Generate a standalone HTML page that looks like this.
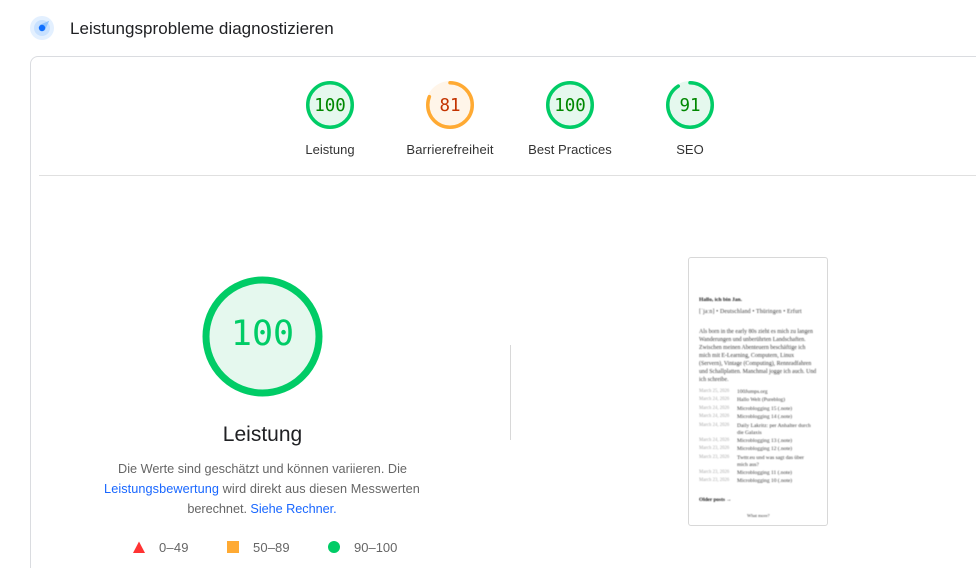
<!DOCTYPE html>
<html lang="de">
<head>
<meta charset="utf-8">
<title>Leistungsprobleme diagnostizieren</title>
<style>
html,body{margin:0;padding:0;background:#fff;overflow:hidden;}
#p{position:relative;width:976px;height:568px;overflow:hidden;background:#fff;font-family:"Liberation Sans",sans-serif;color:#202124;}
.t{position:absolute;white-space:nowrap;line-height:1;}
.c{transform:translateX(-50%);}
a{color:#1967ff;text-decoration:none;}
.s{position:absolute;white-space:nowrap;line-height:1;font-family:"Liberation Serif",serif;font-size:5.85px;color:#3a3a3a;}
.l{font-size:5.45px;}
.d{color:#aaa;font-size:4.75px;}
svg{position:absolute;}
</style>
</head>
<body>
<div id="p">
<svg style="left:30px;top:16px" width="24" height="24" viewBox="0 0 24 24">
<circle cx="12" cy="12" r="12" fill="#e3f0ff"/>
<circle cx="12" cy="12" r="8" fill="#c8e1ff"/>
<path d="M9.5 9 L19.2 4.8 L14.8 14.5 Z" fill="#8fc4ff"/>
<circle cx="12" cy="12" r="3.2" fill="#0f6fff"/>
</svg>
<div class="t" style="left:70px;top:20px;font-size:17px;letter-spacing:.03px;color:#202124;">Leistungsprobleme diagnostizieren</div>

<div style="position:absolute;left:30px;top:56px;width:980px;height:560px;border:1px solid #dadce0;border-radius:8px;box-sizing:border-box;"></div>
<div style="position:absolute;left:39px;top:175px;width:937px;height:1px;background:#e0e0e0;"></div>

<svg style="left:306px;top:81px" width="48" height="48" viewBox="0 0 48 48">
<circle cx="24" cy="24" r="24" fill="#e5f8ee"/>
<circle cx="24" cy="24" r="22.25" fill="none" stroke="#00cc66" stroke-width="3.5"/>
</svg>
<svg style="left:426px;top:81px" width="48" height="48" viewBox="0 0 48 48">
<circle cx="24" cy="24" r="24" fill="#fff5e9"/>
<circle cx="24" cy="24" r="22.25" fill="none" stroke="#ffaa33" stroke-width="3.5" stroke-linecap="round" stroke-dasharray="113.2 139.8" transform="rotate(-90 24 24)"/>
</svg>
<svg style="left:546px;top:81px" width="48" height="48" viewBox="0 0 48 48">
<circle cx="24" cy="24" r="24" fill="#e5f8ee"/>
<circle cx="24" cy="24" r="22.25" fill="none" stroke="#00cc66" stroke-width="3.5"/>
</svg>
<svg style="left:666px;top:81px" width="48" height="48" viewBox="0 0 48 48">
<circle cx="24" cy="24" r="24" fill="#e5f8ee"/>
<circle cx="24" cy="24" r="22.25" fill="none" stroke="#00cc66" stroke-width="3.5" stroke-linecap="round" stroke-dasharray="127.2 139.8" transform="rotate(-90 24 24)"/>
</svg>

<div class="t c" style="left:330px;top:98px;font:17.5px/1 'DejaVu Sans Mono',monospace;color:#008800;">100</div>
<div class="t c" style="left:450px;top:98px;font:17.5px/1 'DejaVu Sans Mono',monospace;color:#c33300;">81</div>
<div class="t c" style="left:570px;top:98px;font:17.5px/1 'DejaVu Sans Mono',monospace;color:#008800;">100</div>
<div class="t c" style="left:690px;top:98px;font:17.5px/1 'DejaVu Sans Mono',monospace;color:#008800;">91</div>

<div class="t c" style="left:330px;top:143px;font-size:13px;letter-spacing:.02px;color:#333;">Leistung</div>
<div class="t c" style="left:450px;top:143px;font-size:13px;letter-spacing:.12px;color:#333;">Barrierefreiheit</div>
<div class="t c" style="left:570px;top:143px;font-size:13px;letter-spacing:.04px;color:#333;">Best Practices</div>
<div class="t c" style="left:690px;top:143px;font-size:13px;color:#333;">SEO</div>

<svg style="left:202px;top:276px" width="121" height="121" viewBox="0 0 121 121">
<circle cx="60.5" cy="60.5" r="56.5" fill="#e5f8ee" stroke="#00cc66" stroke-width="7"/>
</svg>
<div class="t c" style="left:262.5px;top:317px;font:35px/1 'DejaVu Sans Mono',monospace;color:#00cc66;">100</div>
<div class="t c" style="left:262.5px;top:424px;font-size:21px;color:#202124;">Leistung</div>

<div class="t c" style="left:262.5px;top:463px;font-size:12.7px;color:#666;">Die Werte sind geschätzt und können variieren. Die</div>
<div class="t c" style="left:262px;top:483px;font-size:12.7px;color:#666;letter-spacing:.08px;"><a>Leistungsbewertung</a> wird direkt aus diesen Messwerten</div>
<div class="t c" style="left:262px;top:503px;font-size:12.7px;color:#666;letter-spacing:-.04px;">berechnet. <a>Siehe Rechner.</a></div>

<svg style="left:133px;top:541px" width="12" height="12" viewBox="0 0 12 12"><path d="M6 0.5 L12 12 L0 12 Z" fill="#ff3333"/></svg>
<div class="t" style="left:159px;top:541px;font-size:13px;letter-spacing:.2px;color:#666;">0–49</div>
<div style="position:absolute;left:227px;top:541px;width:12px;height:12px;background:#ffaa33;"></div>
<div class="t" style="left:253px;top:541px;font-size:13px;letter-spacing:.12px;color:#666;">50–89</div>
<div style="position:absolute;left:328px;top:541px;width:12px;height:12px;border-radius:50%;background:#00cc66;"></div>
<div class="t" style="left:354px;top:541px;font-size:13px;color:#666;">90–100</div>

<div style="position:absolute;left:510px;top:345px;width:1px;height:95px;background:#d8d8d8;"></div>

<div style="position:absolute;left:688px;top:257px;width:140px;height:269px;box-sizing:border-box;border:1px solid #d8d8d8;border-radius:3px;background:#fff;"></div>
<div style="position:absolute;left:0;top:0;width:976px;height:568px;filter:blur(.45px);">
<div class="s" style="left:699px;top:298px;font-weight:bold;color:#111;font-size:5.5px;">Hallo, ich bin Jan.</div>
<div class="s" style="left:699px;top:310px;font-size:5.85px;letter-spacing:.14px;">[ˈjaːn] • Deutschland • Thüringen • Erfurt</div>
<div class="s" style="left:699px;top:330px;">Als born in the early 80s zieht es mich zu langen</div>
<div class="s" style="left:699px;top:338px;">Wanderungen und unberührten Landschaften.</div>
<div class="s" style="left:699px;top:346px;">Zwischen meinen Abenteuern beschäftige ich</div>
<div class="s" style="left:699px;top:354px;">mich mit E-Learning, Computern, Linux</div>
<div class="s" style="left:699px;top:362px;">(Servern), Vintage (Computing), Rennradfahren</div>
<div class="s" style="left:699px;top:370px;">und Schallplatten. Manchmal jogge ich auch. Und</div>
<div class="s" style="left:699px;top:378px;">ich schreibe.</div>

<div class="s d" style="left:699px;top:390px;">March 25, 2026</div><div class="s l" style="left:737px;top:389.5px;">100Jumps.org</div>
<div class="s d" style="left:699px;top:398px;">March 24, 2026</div><div class="s l" style="left:737px;top:397.5px;">Hallo Welt (Pureblog)</div>
<div class="s d" style="left:699px;top:407px;">March 24, 2026</div><div class="s l" style="left:737px;top:406.5px;">Microblogging 15 (.note)</div>
<div class="s d" style="left:699px;top:415px;">March 24, 2026</div><div class="s l" style="left:737px;top:414.5px;">Microblogging 14 (.note)</div>
<div class="s d" style="left:699px;top:424px;">March 24, 2026</div><div class="s l" style="left:737px;top:423.5px;letter-spacing:.03px;">Daily Lakritz: per Anhalter durch</div>
<div class="s l" style="left:737px;top:430.5px;">die Galaxis</div>
<div class="s d" style="left:699px;top:439px;">March 24, 2026</div><div class="s l" style="left:737px;top:438.5px;">Microblogging 13 (.note)</div>
<div class="s d" style="left:699px;top:447px;">March 23, 2026</div><div class="s l" style="left:737px;top:446.5px;">Microblogging 12 (.note)</div>
<div class="s d" style="left:699px;top:456px;">March 23, 2026</div><div class="s l" style="left:737px;top:455.5px;">Twttr.eu und was sagt das über</div>
<div class="s l" style="left:737px;top:462.5px;">mich aus?</div>
<div class="s d" style="left:699px;top:471px;">March 23, 2026</div><div class="s l" style="left:737px;top:470.5px;">Microblogging 11 (.note)</div>
<div class="s d" style="left:699px;top:479px;">March 23, 2026</div><div class="s l" style="left:737px;top:478.5px;">Microblogging 10 (.note)</div>
<div class="s" style="left:699px;top:497.5px;font-weight:bold;color:#111;font-size:5.3px;">Older posts →</div>
<div class="s" style="left:747px;top:514px;font-size:4.6px;">What more?</div>
</div>
</div>
</body>
</html>
